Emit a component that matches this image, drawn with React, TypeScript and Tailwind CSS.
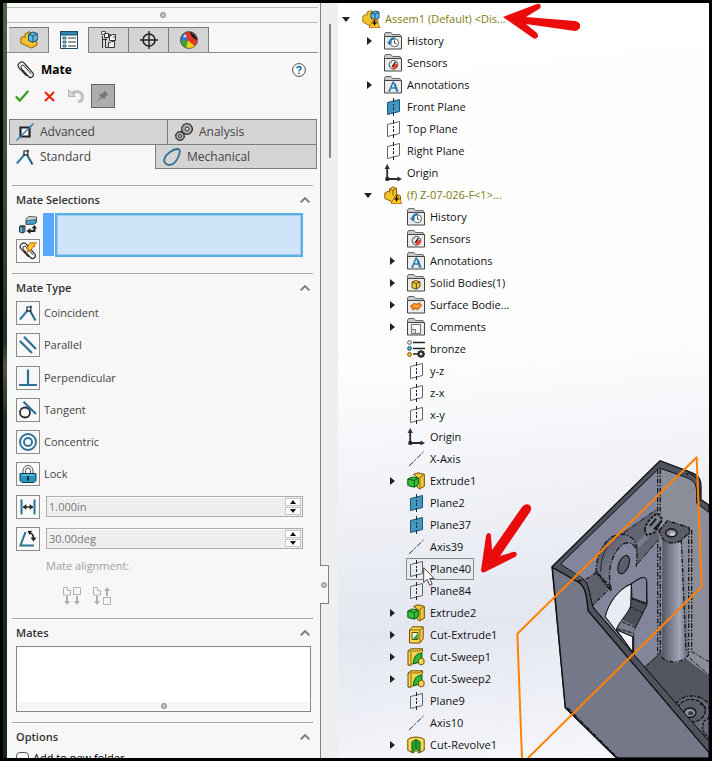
import React, { useState } from "react";

const Svg = ({ children }: { children: React.ReactNode }) => (
  <svg viewBox="0 0 18 18" className="h-[18px] w-[18px] shrink-0" fill="none" aria-hidden="true">
    {children}
  </svg>
);

/* ---------- feature tree icons ---------- */

const Folder = ({ children }: { children: React.ReactNode }) => (
  <Svg>
    <path d="M.5 16.500V2L1.500.5h5.500l1.500 2h7.500l1 2.500v11.500z" fill="#c9c9c9" stroke="#6a6a6a" />
    <path d="M.5 4.500h17v12.500H.5z" fill="#ececec" stroke="#444" />
    {children}
  </Svg>
);

const HistoryIcon = () => (
  <Folder>
    <circle cx="10.500" cy="10.800" r="4" fill="#fff" stroke="#666" />
    <path d="M10.500 8.500v2.600l2 .8" stroke="#444" />
    <path d="M11 6.300C7.500 6 6 8 5.600 10.500" stroke="#1d7fae" strokeWidth="1.800" />
    <path d="M2.800 9.800h5.400l-2.500 3.600z" fill="#1d7fae" />
  </Folder>
);

const SensorIcon = () => (
  <Folder>
    <circle cx="9.500" cy="10.800" r="4.300" fill="#fff" stroke="#444" />
    <path d="M9.500 10.800l4-1.200a4 4 0 0 1-5 5.100z" fill="#ef3f24" />
    <path d="M8 12.800L11.500 8" stroke="#222" strokeWidth="1.400" />
    <path d="M6 11.500l1 1.200M7 8.400l1 .8" stroke="#1d7fae" />
  </Folder>
);

const AnnotationIcon = () => (
  <Folder>
    <path d="M5.300 15L9 6.300h.6L13 15M6.800 12h5.200" stroke="#2b7ca6" strokeWidth="1.500" />
    <path d="M11 8l2.300 7" stroke="#2b7ca6" strokeWidth="1.800" />
    <path d="M4 15h3M11.500 15h3.200" stroke="#2b7ca6" />
  </Folder>
);

const SolidBodyIcon = () => (
  <Folder>
    <path d="M5 8.200L8.500 6.500l4.500 1.300v4.900l-3.700 2.500-4.300-1.600z" fill="#e8c545" stroke="#6a4e00" />
    <path d="M5 8.200l4.400 1.400L13 7.800M9.400 9.600v5.400" stroke="#6a4e00" />
  </Folder>
);

const SurfaceIcon = () => (
  <Folder>
    <path d="M3.500 10L7 7.400l3 .8 2.500-1.700 2 3-3.500 4-3-.8L6 14z" fill="#ff8c1a" stroke="#a44a00" strokeWidth=".8" />
    <path d="M7.500 9.800l3.500.4" stroke="#ffd08a" />
  </Folder>
);

const CommentIcon = () => (
  <Folder>
    <path d="M4.500 6.500h9v9h-9z" stroke="#777" fill="#f6f6f6" />
    <path d="M4.500 11.500h4v4h-4z" stroke="#777" fill="#ddd" />
  </Folder>
);

const OpenPlane = () => (
  <Svg>
    <path d="M3.500 4.500L15.500 1.500V13.500L3.500 16.500z" stroke="#555" strokeWidth=".9" />
    <path d="M9.500 0v4M9.500 6v2M9.500 9v3M9.500 14v4" stroke="#222" />
  </Svg>
);

const FilledPlane = () => (
  <Svg>
    <path d="M3.500 4.500L15.500 1.500V13.500L3.500 16.500z" fill="#4596be" stroke="#1b5674" />
    <path d="M9.500 0v4M9.500 6v2M9.500 9v3M9.500 14v4" stroke="#12303f" />
  </Svg>
);

const OriginIcon = () => (
  <Svg>
    <path d="M3.200 3v12h12" stroke="#2c2c2c" strokeWidth="1.800" />
    <path d="M.6 5L3.200 0l2.600 5zM13.500 12.400L18 15l-4.500 2.600z" fill="#333" />
    <path d="M1.400 13.200h3.600v3.600H1.400z" fill="#222" />
  </Svg>
);

const AxisIcon = () => (
  <Svg>
    <path d="M2 16L16.500 2" stroke="#333" strokeDasharray="6 1.500 2 1.500" />
  </Svg>
);

const WarningBadge = () => (
  <>
    <path d="M12.500 8L18 17.500H7z" fill="#ffd21a" stroke="#c2541c" strokeWidth=".8" />
    <path d="M12.500 9.500v6M10.500 13h4" stroke="#111" strokeWidth="1.500" />
  </>
);

const AssemblyIcon = () => (
  <Svg>
    <path d="M.8 6L3.500 4.500l1.500.8V2L9 .7l3 1.500V8l4 2v4l-6 3L.8 12z" fill="#f1c12e" stroke="#a97b12" />
    <path d="M9 3l4.500-2L17 2v6l-4 1.800L9 8.200z" fill="#63b9e4" stroke="#17506e" />
    <path d="M9 3l4 1.200L17 2M13 4.200v5.500" stroke="#17506e" />
    <WarningBadge />
  </Svg>
);

const PartIcon = () => (
  <Svg>
    <path d="M.8 7L4 5.300l1.500.8V3L9 .8l3.500 1.500V8l4 2v4l-6 3L.8 12.500z" fill="#f1c12e" stroke="#8a6208" />
    <path d="M5.500 3.200L9 4.500l3.500-2M9 4.500v5" stroke="#8c6600" />
    <WarningBadge />
  </Svg>
);

const MaterialIcon = () => (
  <Svg>
    <circle cx="2.500" cy="2.500" r="1.900" fill="#e8e8e8" stroke="#666" />
    <circle cx="2.500" cy="8.500" r="1.900" fill="#54b5e6" stroke="#17506e" />
    <circle cx="2.500" cy="14.500" r="1.900" fill="#ffc726" stroke="#7a5600" />
    <path d="M6 2.500h12M6 8.500h12M6 14h5" stroke="#222" strokeWidth="1.600" />
    <circle cx="14" cy="14" r="2.400" stroke="#333" strokeWidth="2.400" />
    <path d="M14 10v1.500M14 16.500V18M10 14h1.500M16.500 14H18M11.200 11.200l1 1M15.800 15.800l1 1M16.800 11.200l-1 1M12.200 15.800l-1 1" stroke="#333" strokeWidth="1.500" />
  </Svg>
);

const ExtrudeIcon = () => (
  <Svg>
    <path d="M6.500 2.500L11 .8l6.300 1.500v12L12.500 17 10 15V5z" fill="#f1c93c" stroke="#6d4c00" />
    <path d="M13 5l4-2.500M13 5v11" stroke="#8c6600" />
    <path d="M.8 7l4-2 6.500 1v6.500l-4 2.700L.8 13.500z" fill="#35c13b" stroke="#0d5a14" />
    <path d="M.8 7l6.500 1.500L11.300 6M7.300 8.500v6.500" stroke="#0d5a14" />
  </Svg>
);

const CutExtrudeIcon = () => (
  <Svg>
    <path d="M2.500 4L5.500.8h10.700v12L13 17H2.500z" fill="#f6d754" stroke="#6d4c00" />
    <path d="M2.500 4H13l3.200-3M13 4v13" stroke="#8c6600" />
    <path d="M5 6.500h6v7H5z" fill="#e9fbe9" stroke="#6d4c00" />
    <path d="M10.500 7v6H6z" fill="#1faa35" />
  </Svg>
);

const CutSweepIcon = () => (
  <Svg>
    <path d="M1 3L4 .8h11.500v3L13 6C8 7 7 11 6.500 15L4 17.200H1z" fill="#f6d754" stroke="#6d4c00" />
    <path d="M1 3h11l3.500-2M4 4v13" stroke="#8c6600" />
    <path d="M6.500 16C6.500 9 9 5.500 15 5v5c-2 .5-2.500 2-2.500 4z" fill="#2db83a" stroke="#0d5a14" />
    <path d="M11.500 11.500l3-1.500 2.500 1.500v4l-3 1.500-2.500-1.500z" fill="#f6d754" stroke="#6d4c00" />
  </Svg>
);

const CutRevolveIcon = () => (
  <Svg>
    <path d="M.8 3.500C4 .3 14 .3 17.200 3.500v10.800L12 17l-3-2.500L6 17 .8 14.300z" fill="#f6d754" stroke="#6d4c00" />
    <path d="M5 6L9 3.500 13 6v10l-4-3.500L5 16.500z" fill="#23a834" stroke="#0d5a14" />
    <path d="M9 3.500v9" stroke="#0d5a14" />
  </Svg>
);

/* ---------- panel icons ---------- */

const FeatureTabIcon = () => (
  <Svg>
    <path d="M.8 7L3 5.500l2 1V3L9 .8l4 1.500V9l4 2v3l-5.500 3L.8 12z" fill="#f1c12e" stroke="#8a6208" />
    <path d="M8.500 3.200L13 1l4.300 1.600V9L13 11.300 8.500 9.500z" fill="#63b9e4" stroke="#17506e" />
    <path d="M8.500 3.200L13 5l4.300-2.400M13 5v6" stroke="#17506e" />
  </Svg>
);

const PropertyTabIcon = () => (
  <Svg>
    <path d="M.5.500h17v17H.5z" fill="#fff" stroke="#174a66" />
    <path d="M.5.500h17v3.500H.5z" fill="#2c85b0" stroke="#174a66" />
    <path d="M3 6h3v2H3zM3 10h3v2H3zM3 14h3v2H3z" fill="#8cc8e6" stroke="#174a66" strokeWidth=".8" />
    <path d="M8 7h8M8 11h8M8 15h8" stroke="#333" strokeWidth="1.200" />
  </Svg>
);

const ConfigTabIcon = () => (
  <Svg>
    <path d="M2.500 5v12M2.500 8.500H7M5.500 7v9.500H8" stroke="#333" />
    <path d="M1.500.500h4v3h-4z" fill="#eee" stroke="#555" />
    <path d="M4.500 2.500h4v4h-4z" fill="#f2f2f2" stroke="#333" />
    <path d="M9.500 4.500h2l1-1h3v6h-6z" fill="#f2f2f2" stroke="#333" />
    <path d="M8.500 11.500h2l1-1h3v6h-6z" fill="#f2f2f2" stroke="#333" />
    <path d="M8.500 3.500h3M13 6h2.500" stroke="#555" />
  </Svg>
);

const DimTabIcon = () => (
  <Svg>
    <circle cx="9" cy="9" r="6" stroke="#222" strokeWidth="1.600" />
    <path d="M9 0v18M0 9h18" stroke="#222" strokeWidth="1.400" />
  </Svg>
);

const AppearanceTabIcon = () => (
  <Svg>
    <circle cx="9" cy="9" r="8.500" fill="#e5352b" />
    <path d="M8 9.500L5 1.500A8.500 8.500 0 0 0 .5 9.500z" fill="#3478cc" />
    <path d="M.5 9.500H8L6 17A8.500 8.500 0 0 1 .5 9.500z" fill="#33a63f" />
    <path d="M8 9.500l7 5.500a8.500 8.500 0 0 1-9 2z" fill="#f2cf1b" />
    <path d="M10 .8c4 .5 7 4 7.500 8C14 8.500 10.500 5 10 .8z" fill="#151515" />
    <path d="M11.500 2c2.500 1 4 3 5 5" stroke="#777" />
    <circle cx="5" cy="5" r="1.500" fill="#fff" opacity=".7" />
    <circle cx="9" cy="9" r="8.500" stroke="#444" strokeWidth=".7" />
  </Svg>
);

const ClipGlyph = () => (
  <>
    <path d="M5 8.500l6.500 7a2.800 2.800 0 0 0 4.200-3.700L7.500 2.500A3.200 3.200 0 0 0 2 6.800l7.500 8" stroke="#2b2b2b" strokeWidth="1.200" />
    <path d="M5 8.500L3.800 6C4 4 6 3.700 7 4.800l7 8" stroke="#2b2b2b" />
  </>
);

const CoincidentGlyph = () => (
  <>
    <path d="M.8 15.500L12.500 2" stroke="#2b7ca6" strokeWidth="2" />
    <path d="M10 5l6.500 11.500" stroke="#26627f" strokeWidth="2" />
    <path d="M8 3h3.800v3.800H8z" fill="#fff" stroke="#222" strokeWidth="1.200" />
  </>
);

const ParallelGlyph = () => (
  <path d="M.8 5L13 17M5 .8L17 13" stroke="#2b7294" strokeWidth="2.200" />
);

const PerpendicularGlyph = () => (
  <path d="M0 16h18M9 .5V16" stroke="#2b7294" strokeWidth="2.200" />
);

const TangentGlyph = () => (
  <>
    <circle cx="6" cy="11.500" r="5" stroke="#2b2b2b" strokeWidth="1.800" />
    <path d="M4.500.8L17 13" stroke="#2b7294" strokeWidth="2.200" />
  </>
);

const ConcentricGlyph = () => (
  <>
    <circle cx="9" cy="9" r="8" stroke="#2b7294" strokeWidth="1.900" />
    <circle cx="9" cy="9" r="4" stroke="#2b7294" strokeWidth="1.900" />
  </>
);

const LockGlyph = () => (
  <>
    <path d="M4 9V5.500a5 5 0 0 1 10 0V9M6.500 9V5.500a2.500 2.500 0 0 1 5 0V9" stroke="#555" />
    <path d="M1 8.500h16v7L15 17.500H3l-2-2z" fill="#2794be" stroke="#123f55" />
    <path d="M2.500 10h13" stroke="#8cd3ee" />
    <path d="M9 11v4.500" stroke="#123" strokeWidth="1.800" />
  </>
);

const DistanceGlyph = () => (
  <>
    <path d="M2.500 1.500v15M15.500 1.500v15" stroke="#2b7294" strokeWidth="2" />
    <path d="M4 9h10" stroke="#222" strokeWidth="1.400" />
    <path d="M4 9l3.300-3v6zM14 9l-3.300-3v6z" fill="#222" />
  </>
);

const AngleGlyph = () => (
  <>
    <path d="M6.500 2L1.500 15.500H15" stroke="#2b7294" strokeWidth="2" />
    <path d="M10 2.500c3 .5 4.500 3 4.500 6" stroke="#222" strokeWidth="1.600" />
    <path d="M8.500 1l4.500-.3-2.500 4.300zM11.500 7.500h6l-3 4z" fill="#222" />
  </>
);

/* ---------- data ---------- */

type Node = {
  label: string;
  icon: React.FC;
  level: 0 | 1 | 2;
  arrow?: "open" | "closed";
  warn?: boolean;
  hover?: boolean;
};

const tree: Node[] = [
  { label: "Assem1 (Default) <Dis...", icon: AssemblyIcon, level: 0, arrow: "open", warn: true },
  { label: "History", icon: HistoryIcon, level: 1, arrow: "closed" },
  { label: "Sensors", icon: SensorIcon, level: 1 },
  { label: "Annotations", icon: AnnotationIcon, level: 1, arrow: "closed" },
  { label: "Front Plane", icon: FilledPlane, level: 1 },
  { label: "Top Plane", icon: OpenPlane, level: 1 },
  { label: "Right Plane", icon: OpenPlane, level: 1 },
  { label: "Origin", icon: OriginIcon, level: 1 },
  { label: "(f) Z-07-026-F<1>...", icon: PartIcon, level: 1, arrow: "open", warn: true },
  { label: "History", icon: HistoryIcon, level: 2 },
  { label: "Sensors", icon: SensorIcon, level: 2 },
  { label: "Annotations", icon: AnnotationIcon, level: 2, arrow: "closed" },
  { label: "Solid Bodies(1)", icon: SolidBodyIcon, level: 2, arrow: "closed" },
  { label: "Surface Bodie...", icon: SurfaceIcon, level: 2, arrow: "closed" },
  { label: "Comments", icon: CommentIcon, level: 2, arrow: "closed" },
  { label: "bronze", icon: MaterialIcon, level: 2 },
  { label: "y-z", icon: OpenPlane, level: 2 },
  { label: "z-x", icon: OpenPlane, level: 2 },
  { label: "x-y", icon: OpenPlane, level: 2 },
  { label: "Origin", icon: OriginIcon, level: 2 },
  { label: "X-Axis", icon: AxisIcon, level: 2 },
  { label: "Extrude1", icon: ExtrudeIcon, level: 2, arrow: "closed" },
  { label: "Plane2", icon: FilledPlane, level: 2 },
  { label: "Plane37", icon: FilledPlane, level: 2 },
  { label: "Axis39", icon: AxisIcon, level: 2 },
  { label: "Plane40", icon: OpenPlane, level: 2, hover: true },
  { label: "Plane84", icon: OpenPlane, level: 2 },
  { label: "Extrude2", icon: ExtrudeIcon, level: 2, arrow: "closed" },
  { label: "Cut-Extrude1", icon: CutExtrudeIcon, level: 2, arrow: "closed" },
  { label: "Cut-Sweep1", icon: CutSweepIcon, level: 2, arrow: "closed" },
  { label: "Cut-Sweep2", icon: CutSweepIcon, level: 2, arrow: "closed" },
  { label: "Plane9", icon: OpenPlane, level: 2 },
  { label: "Axis10", icon: AxisIcon, level: 2 },
  { label: "Cut-Revolve1", icon: CutRevolveIcon, level: 2, arrow: "closed" },
];

const indent = { 0: "pl-1", 1: "pl-[26px]", 2: "pl-[49px]" };

const mateTypes = [
  { label: "Coincident", glyph: CoincidentGlyph },
  { label: "Parallel", glyph: ParallelGlyph },
  { label: "Perpendicular", glyph: PerpendicularGlyph },
  { label: "Tangent", glyph: TangentGlyph },
  { label: "Concentric", glyph: ConcentricGlyph },
  { label: "Lock", glyph: LockGlyph },
];

const managerTabs = [
  { label: "FeatureManager", icon: FeatureTabIcon },
  { label: "PropertyManager", icon: PropertyTabIcon },
  { label: "ConfigurationManager", icon: ConfigTabIcon },
  { label: "DimXpertManager", icon: DimTabIcon },
  { label: "DisplayManager", icon: AppearanceTabIcon },
];

/* ---------- pieces ---------- */

function Section({ title, children }: { title: string; children: React.ReactNode }) {
  const [open, setOpen] = useState(true);
  return (
    <section className="ml-[5px] mr-[7px] border-t border-[#a5a5a5]">
      <h2>
        <button
          type="button"
          onClick={() => setOpen(!open)}
          className="flex h-[27px] w-full items-center justify-between pl-1 pr-[3px] pt-px font-semibold text-[#333]"
        >
          {title}
          <svg viewBox="0 0 10 6" className="h-1.5 w-2.5" fill="none" aria-hidden="true">
            <path d="M.7 5.300L5 1l4.300 4.300" stroke="#777" strokeWidth="1.800" />
          </svg>
        </button>
      </h2>
      {open && children}
    </section>
  );
}

const GlyphBox = ({ children }: { children: React.ReactNode }) => (
  <span className="flex h-6 w-6 shrink-0 items-center justify-center border border-[#8c8c8c] bg-[#f8f8f8]">
    <Svg>{children}</Svg>
  </span>
);

function ValueField({ label, initial, children }: { label: string; initial: string; children: React.ReactNode }) {
  const [value, setValue] = useState(initial);
  const step = (by: number) => {
    const unit = value.replace(/[-\d.]/g, "");
    const digits = (value.split(".")[1] ?? "").replace(/\D/g, "").length;
    setValue((parseFloat(value) + by).toFixed(digits) + unit);
  };
  return (
    <div className="flex items-center gap-1.5">
      <button type="button" aria-label={label}>
        <GlyphBox>{children}</GlyphBox>
      </button>
      <div className="flex h-[21px] min-w-0 flex-1 border border-[#adadb0] bg-[#efefef]">
        <input
          aria-label={label + " value"}
          value={value}
          onChange={(e) => setValue(e.target.value)}
          className="min-w-0 flex-1 border-t border-white bg-transparent px-0.5 text-[#777] outline-none"
        />
        <div className="my-px mr-px flex w-4 flex-col gap-px">
          <button type="button" aria-label={label + " up"} onClick={() => step(1)} className="flex flex-1 items-center justify-center border border-[#c5c5c5] bg-white">
            <svg viewBox="0 0 6 4" className="h-1 w-1.5"><path d="M0 4l3-4 3 4z" fill="#111" /></svg>
          </button>
          <button type="button" aria-label={label + " down"} onClick={() => step(-1)} className="flex flex-1 items-center justify-center border border-[#c5c5c5] bg-white">
            <svg viewBox="0 0 6 4" className="h-1 w-1.5"><path d="M0 0l3 4 3-4z" fill="#111" /></svg>
          </button>
        </div>
      </div>
    </div>
  );
}

const Grip = () => <span className="block h-1.5 w-1.5 rounded-full border border-[#888] bg-[#c4c4c4]" />;

function PropertyPanel() {
  return (
    <div className="relative w-[314px] shrink-0 border-r border-[#808080] bg-[#f7f7f7]">
      <div className="mr-0.5 mt-1 flex h-4 items-center justify-center border-y border-[#bbb]">
        <Grip />
      </div>

      <div className="mr-0.5 mt-1 flex h-[26px] border-b border-[#8f8f8f] pl-0.5" role="tablist">
        {managerTabs.map(({ label, icon: Icon }, i) => (
          <button
            key={label}
            type="button"
            role="tab"
            aria-label={label}
            aria-selected={i === 1}
            className={
              i === 1
                ? "-mb-px flex w-[39px] items-center justify-center bg-[#f7f7f7]"
                : "flex w-10 items-center justify-center border-r border-t border-[#7d7d7d] bg-[#d4d4d4] nth-3:w-[41px] nth-3:border-l"
            }
          >
            <Icon />
          </button>
        ))}
      </div>

      <div className="mt-1.5 flex h-[22px] items-center gap-1.5 pl-2.5 pr-3.5">
        <Svg>
          <ClipGlyph />
        </Svg>
        <h1 className="flex-1 text-xs font-bold text-black">Mate</h1>
        <button type="button" aria-label="Help">
          <svg viewBox="0 0 14 14" className="h-3.5 w-3.5" fill="none">
            <circle cx="7" cy="7" r="6.400" fill="#fff" stroke="#444" />
            <path d="M5 5.300C5 3 9 3 9 5.200 9 6.700 7 6.500 7 8.400M7 9.600v1.400" stroke="#2078a8" strokeWidth="1.700" />
          </svg>
        </button>
      </div>

      <div className="mt-[3px] flex h-6 items-center pl-2">
        <button type="button" aria-label="OK">
          <svg viewBox="0 0 14 12" className="h-3 w-3.5" fill="none"><path d="M.8 6.500l4 4L13.300 1" stroke="#2f9e12" strokeWidth="2.200" /></svg>
        </button>
        <button type="button" aria-label="Cancel" className="ml-[15px]">
          <svg viewBox="0 0 11 11" className="h-[11px] w-[11px]" fill="none"><path d="M1 1l9 9M10 1l-9 9" stroke="#e12a0e" strokeWidth="2.200" /></svg>
        </button>
        <button type="button" aria-label="Undo" className="ml-[13px]">
          <svg viewBox="0 0 16 14" className="h-3.5 w-4" fill="none">
            <path d="M4 4.500c5-4 11-1 10.500 4C14.300 11 12.500 12.500 10 13" stroke="#aaa" strokeWidth="2.600" />
            <path d="M4 4.500c5-4 11-1 10.500 4C14.300 11 12.500 12.500 10 13" stroke="#ddd" />
            <path d="M.7.800v6.500h6.500z" fill="#ddd" stroke="#aaa" />
          </svg>
        </button>
        <button type="button" aria-label="Keep visible" aria-pressed="true" className="ml-[7px] flex h-6 w-6 items-center justify-center border border-[#666] bg-[#adadad]">
          <svg viewBox="0 0 12 12" className="h-3 w-3">
            <path d="M7 .5l4.500 4-1.500.7-2.200 2.300v2L4.500 7.500 0 12l3.500-5.500-2-2L4.500 4 7 2z" fill="#777" />
          </svg>
        </button>
      </div>

      <div className="ml-0.5 mr-[3px] mt-[11px] flex h-[26px] border-y border-l border-[#7d7d7d] text-xs text-[#444]">
        <button type="button" className="flex w-[158px] items-center gap-1.5 border-r border-[#7d7d7d] bg-[#d4d4d4] pl-1.5">
          <Svg>
            <path d="M4.500 4.500h9v9h-9z" stroke="#222" strokeWidth="2.200" fill="#fff" />
            <path d="M.5 17.500L17.500.5" stroke="#2b7ca6" strokeWidth="1.400" />
          </Svg>
          Advanced
        </button>
        <button type="button" className="flex flex-1 items-center gap-1.5 border-r border-[#7d7d7d] bg-[#d4d4d4] pl-[7px]">
          <Svg>
            <circle cx="12" cy="6" r="5.300" fill="#aaa" stroke="#444" strokeWidth="1.200" />
            <circle cx="12" cy="6" r="5.500" stroke="#333" strokeDasharray="2 1.500" />
            <circle cx="12" cy="6" r="2" fill="#ddd" stroke="#333" />
            <circle cx="5" cy="13" r="4.200" fill="#aaa" stroke="#444" strokeWidth="1.200" />
            <circle cx="5" cy="13" r="4.500" stroke="#333" strokeDasharray="2 1.500" />
            <circle cx="5" cy="13" r="1.500" fill="#ddd" stroke="#333" />
          </Svg>
          Analysis
        </button>
      </div>
      <div className="ml-0.5 mr-[3px] flex h-6 text-xs text-[#444]">
        <button type="button" className="flex w-[146px] items-center gap-1.5 bg-[#f7f7f7] pl-[7px]">
          <Svg>
            <CoincidentGlyph />
          </Svg>
          Standard
        </button>
        <button type="button" className="flex flex-1 items-center gap-1.5 border-x border-b border-[#7d7d7d] bg-[#d4d4d4] pl-[7px]">
          <Svg>
            <path d="M1.500 10.500C3 6 10.500 1 14.500 1c3.500 0 2.500 4 .5 8.500-2.500 5.500-5 7.500-8.500 7.500C2.500 17 .5 14 1.500 10.500z" stroke="#2b7294" strokeWidth="1.800" />
          </Svg>
          Mechanical
        </button>
      </div>

      <div className="h-4" />

      <Section title="Mate Selections">
        <div className="mb-2.5 ml-1 mr-2.5 flex">
          <div className="flex flex-col gap-0.5">
            <button type="button" aria-label="Entities to mate" className="flex h-6 w-6 items-center justify-center">
              <Svg>
                <path d="M7 3l2.500-2.500 8 .5v5l-2.500 2-8 .5z" fill="#d8d8d8" stroke="#555" />
                <path d="M7.500 4.500l9.500-1v3.500l-2 1-7.500.5z" fill="#4ba0c8" stroke="#26566e" strokeWidth=".8" />
                <path d="M.5 10.500l2-1 3.500.5v5.500L4 17l-3.500-1z" fill="#63aed4" stroke="#333" />
                <path d="M.5 10.500L4 11v6M4 11l2-1" stroke="#333" />
                <path d="M10.500 15h5v-3.500" stroke="#222" strokeWidth="1.800" />
                <path d="M7.500 15l4-3v6zM12.500 12.500l3-3.500 2.500 3.500z" fill="#222" />
              </Svg>
            </button>
            <button type="button" aria-label="Multiple mate mode">
              <GlyphBox>
                <ClipGlyph />
                <path d="M11 .8h6.500L14.500 4h1.500L7 11.500l2.500-4.500H7.500z" fill="#ffc928" stroke="#c4600c" strokeWidth=".9" />
              </GlyphBox>
            </button>
          </div>
          <span className="ml-[3px] h-[43px] w-[11px] bg-[#57a7ff]" />
          <textarea
            aria-label="Mate selections"
            className="ml-px h-11 min-w-0 flex-1 resize-none border-2 border-[#57b1e6] bg-[#cfe4f9] outline-none ring-1 ring-inset ring-[#a3cdf0]"
          />
        </div>
      </Section>

      <Section title="Mate Type">
        <div className="ml-1 mr-2.5 flex h-[250px] flex-col items-stretch justify-between">
          {mateTypes.map(({ label, glyph: Glyph }) => (
            <button key={label} type="button" className="flex items-center gap-1 text-left text-[#444]">
              <GlyphBox>
                <Glyph />
              </GlyphBox>
              {label}
            </button>
          ))}
          <ValueField label="Distance" initial="1.000in">
            <DistanceGlyph />
          </ValueField>
          <ValueField label="Angle" initial="30.00deg">
            <AngleGlyph />
          </ValueField>
        </div>
        <p className="ml-[34px] mt-1.5 h-[18px] leading-[18px] text-[#a0a0a0]">Mate alignment:</p>
        <div className="mb-[13px] ml-[51px] mt-3 flex gap-3">
          <button type="button" aria-label="Aligned">
            <Svg>
              <path d="M.5.500h4v3h3v4.500H.5zM10.500.500h7v7h-7z" stroke="#b0b0b0" />
              <path d="M4 9v6M14 9v6" stroke="#b0b0b0" strokeWidth="2" />
              <path d="M1 14h6l-3 4zM11 14h6l-3 4z" fill="#b0b0b0" />
            </Svg>
          </button>
          <button type="button" aria-label="Anti-aligned">
            <Svg>
              <path d="M.5.500h4v3h3v4.500H.5zM10.500 10.500h7v7h-7z" stroke="#b0b0b0" />
              <path d="M4 9v6M14 3v6" stroke="#b0b0b0" strokeWidth="2" />
              <path d="M1 14h6l-3 4zM11 4h6l-3-4z" fill="#b0b0b0" />
            </Svg>
          </button>
        </div>
      </Section>

      <Section title="Mates">
        <div role="listbox" aria-label="Mates" className="mb-2.5 ml-1 mr-0.5 flex h-[66px] flex-col justify-end border border-[#80868f] bg-white p-px">
          <div className="flex h-2 items-center justify-center bg-[#f5f5f5]">
            <Grip />
          </div>
        </div>
      </Section>

      <Section title="Options">
        <label className="ml-1 flex items-center gap-1 text-black">
          <input type="checkbox" className="h-[13px] w-[13px] appearance-none rounded-sm border border-[#555] bg-white checked:bg-[#2b7294]" />
          Add to new folder
        </label>
      </Section>

      <button
        type="button"
        aria-label="Collapse panel"
        className="absolute -right-[9px] top-[562px] flex h-[39px] w-[9px] items-center justify-center border-y border-r border-[#808080] bg-[#f7f7f7]"
      >
        <Grip />
      </button>
    </div>
  );
}

function FeatureTree() {
  return (
    <ul className="relative pt-[5px] text-[#111]" role="tree">
      {tree.map(({ label, icon: Icon, level, arrow, warn, hover }, i) => (
        <li key={i} role="treeitem" className={"flex h-[22px] items-center " + indent[level]}>
          <span className="flex w-5 shrink-0">
            {arrow === "open" && (
              <svg viewBox="0 0 8 5" className="h-[5px] w-2"><path d="M0 0h8L4 5z" fill="#222" /></svg>
            )}
            {arrow === "closed" && (
              <svg viewBox="0 0 5 8" className="ml-[3px] h-2 w-[5px]"><path d="M0 0v8l5-4z" fill="#222" /></svg>
            )}
          </span>
          <span
            className={
              "relative flex items-center gap-[5px] whitespace-nowrap " +
              (hover ? "h-5 pr-0.5 outline outline-1 outline-[#888]" : "")
            }
          >
            <Icon />
            <span className={warn ? "text-[#807c10]" : ""}>{label}</span>
            {hover && (
              <svg viewBox="0 0 12 20" className="absolute left-4 top-2 h-5 w-3" fill="none" aria-hidden="true">
                <path d="M.7.800v14.700l3.500-3.200 2.500 6 2.500-1-2.500-5.800h4.500z" fill="#fff" stroke="#444" />
              </svg>
            )}
          </span>
        </li>
      ))}
    </ul>
  );
}

const Model = () => (
  <svg viewBox="0 0 627 954" className="absolute bottom-0 right-0 h-[318px] w-[209px]" fill="none" aria-hidden="true">
    <defs>
      <linearGradient id="column" x1="0" x2="1">
        <stop offset="0" stopColor="#555764" />
        <stop offset=".3" stopColor="#77798a" />
        <stop offset=".68" stopColor="#a3a5b8" />
        <stop offset="1" stopColor="#62646f" />
      </linearGradient>
      <linearGradient id="boss" x1="0" x2="1" y2="1">
        <stop offset="0" stopColor="#4c4e59" />
        <stop offset=".5" stopColor="#737586" />
        <stop offset="1" stopColor="#555764" />
      </linearGradient>
    </defs>
    {/* housing silhouette and rim */}
    <path d="M156 380L480 62l85 32c25 8 38 18 38 45v40l24 16v759H350L196 803z" fill="#50525e" stroke="#111" strokeWidth="4" />
    {/* inner walls and floor */}
    <path d="M182 372L478 84v556l-46 40-150-172c-12-20-8-50-35-88z" fill="#83859a" />
    <path d="M478 84l80 28c25 10 32 20 32 50v28l37 27v490l-60-40-89-20z" fill="#8b8d99" />
    <path d="M432 680l48-42 80 20 67 50v197z" fill="#54565f" />
    <path d="M182 372L478 84l80 28c25 10 32 20 32 50v28l37 27" stroke="#111" strokeWidth="3" />
    <path d="M182 372l68 45c20 15 22 60 30 85l347 404" stroke="#111" strokeWidth="3" />
    {/* vertical corner fillets */}
    <path d="M473 88v555M481 88v150M481 320v320M566 270v370M575 270v365" stroke="#1b1b20" strokeWidth="4" strokeDasharray="14 5 4 5" />
    {/* long rib */}
    <path d="M366 278l104-70 8 90-66 74-60-30z" fill="#62646f" />
    <path d="M372 278l98-70M412 372l62-72" stroke="#16161a" strokeWidth="3" strokeDasharray="16 5 4 5" />
    <path d="M395 335l60-60" stroke="#7a7c8d" strokeWidth="14" />
    <path d="M434 270c5-25 20-38 38-50l15 18-24 40-22 8z" fill="#7b7d8c" stroke="#111" strokeWidth="5" strokeDasharray="9 4" />
    <path d="M450 258l18-22M462 268l22-24" stroke="#111" strokeWidth="5" />
    {/* boss with through hole */}
    <path d="M288 400c0-60 30-112 70-118 45 0 60 35 50 62l-75 95z" fill="url(#boss)" stroke="#16161a" strokeWidth="4" strokeDasharray="16 5 4 5" />
    <path d="M334 450c-14-60 0-105 32-136 28-16 47 4 45 36l-2 30" fill="#83859a" stroke="#16161a" strokeWidth="4" strokeDasharray="16 5 4 5" />
    <path d="M302 395c0-50 20-90 52-104" stroke="#25252b" strokeWidth="3" />
    <ellipse cx="371" cy="374" rx="15" ry="29" transform="rotate(22 371 374)" fill="#5b5d68" stroke="#111" strokeWidth="3" />
    <path d="M258 424l34-28 36 46-50 52-10-46z" fill="#5e606c" />
    <path d="M258 418l34-22 38 48-50 50M290 400l44 55" stroke="#16161a" strokeWidth="4" strokeDasharray="12 4 4 4" />
    {/* triangular window */}
    <path d="M316 530c8-38 40-84 76-98 20-14 46-32 48-8l1 70-40 80v66z" fill="#4c4e58" stroke="#111" strokeWidth="3" />
    <path d="M316 530c8-38 40-84 78-98l-2 66c-10 26-38 50-44 74z" fill="#eaecf3" stroke="#111" strokeWidth="3" />
    <path d="M350 570l48 20v46z" fill="#f0f2f7" stroke="#111" strokeWidth="3" />
    <path d="M394 432c22-16 44-30 46-8v66l-44-16z" fill="#83859a" stroke="#111" strokeWidth="3" />
    <path d="M366 540l40 18-6 30-48-20z" fill="#7a7c8d" />
    <path d="M394 476l46 18M390 500l42 20M366 546l40 16M352 566l50 14" stroke="#16161a" strokeWidth="3" strokeDasharray="12 4" />
    {/* column */}
    <path d="M487 298c16 14 44 16 64-4l14 350c-12 28-66 32-80 6z" fill="url(#column)" />
    <path d="M478 272l24-30 64 20 4 14-28 26c-20 14-50 4-56-8z" fill="#5b5d68" stroke="#111" strokeWidth="4" strokeDasharray="14 4 4 4" />
    <ellipse cx="514" cy="279" rx="17" ry="12" fill="#8b8d9c" stroke="#111" strokeWidth="4" />
    <ellipse cx="517" cy="282" rx="8" ry="6" fill="#c5c7d2" />
    <path d="M485 650c10 22 68 22 82-8M544 300l14 335" stroke="#16161a" strokeWidth="4" strokeDasharray="14 5 4 5" />
    {/* floor edges and bearing seats */}
    <path d="M440 678l40-38M575 635l52 30M570 655l57 50" stroke="#16161a" strokeWidth="3" strokeDasharray="12 4 4 4" />
    <path d="M528 792c18-28 58-32 88-10l11 8v112l-97-104z" fill="#686a76" stroke="#111" strokeWidth="4" strokeDasharray="12 4 4 4" />
    <ellipse cx="574" cy="812" rx="42" ry="34" fill="#5b5d68" stroke="#111" strokeWidth="4" strokeDasharray="12 4" />
    <ellipse cx="570" cy="818" rx="18" ry="14" fill="#8b8d9c" stroke="#111" strokeWidth="4" />
    <ellipse cx="572" cy="820" rx="8" ry="6" fill="#3a3b43" />
    <path d="M627 832l-16 12-4 26 20 24M600 790l20 14" stroke="#111" strokeWidth="4" strokeDasharray="8 4" />
    {/* near rim and outer face */}
    <path d="M250 418c20 15 20 60 30 86l347 400v34L264 512c-4-40-6-72-30-86z" fill="#50525e" stroke="#111" strokeWidth="3" />
    <path d="M157 382l77 44c24 14 26 46 30 86l363 426v16H350L196 803z" fill="#747888" stroke="#111" strokeWidth="4" />
    <path d="M202 803l150 150" stroke="#111" strokeWidth="4" strokeDasharray="14 4 5 4" />
    <path d="M565 98c22 8 32 24 32 44v44" stroke="#111" strokeWidth="3" />
    <circle cx="562" cy="102" r="3" fill="#111" />
    <circle cx="238" cy="422" r="3" fill="#111" />
    {/* highlighted plane */}
    <path d="M66 956L52 581 590 52l15 388L84 954" stroke="#ff8205" strokeWidth="6" strokeLinejoin="round" />
  </svg>
);

export default function App() {
  return (
    <div className="h-screen min-w-[640px] overflow-hidden bg-black p-[3px] font-['Open_Sans','Noto_Sans',sans-serif] text-[11px] leading-4">
      <main className="flex h-full overflow-hidden">
        <div className="w-1 shrink-0 bg-[linear-gradient(180deg,#4a6648,#2e4a33_30%,#1c3322_45%,#4d5a38_48%,#1b3020_55%,#16281e)]" />
        <PropertyPanel />
        <div className="w-[17px] shrink-0 bg-[#efefef] pl-2 pt-[21px]">
          <div className="h-[134px] w-0.5 bg-[#858585]" />
        </div>
        <section className="relative min-w-0 flex-1 overflow-hidden bg-[linear-gradient(174deg,#ffffff_0%,#fdfdfe_46%,#e4e7f0_80%,#f7f8fc_100%)]" aria-label="Graphics area">
          <Model />
          <FeatureTree />
          <svg viewBox="0 0 80 40" className="absolute left-[162px] top-0 h-10 w-20" aria-hidden="true">
            <path d="M3 14L37 1c4-1 5 3 2 5l-13 8 49 4c7 1 7 9 0 10l-49-7 11 9c3 4-1 7-4 5z" fill="#ea0c0c" />
          </svg>
          <svg viewBox="0 0 60 75" className="absolute left-[140px] top-[498px] h-[75px] w-[60px]" aria-hidden="true">
            <path d="M3 69L8 35c1-4 5-4 5 0l1 14L44 6c5-6 12-1 8 5L22 55l13-4c4-1 5 3 2 5L7 71c-2 1-4 0-4-2z" fill="#ea0c0c" />
          </svg>
        </section>
      </main>
    </div>
  );
}
